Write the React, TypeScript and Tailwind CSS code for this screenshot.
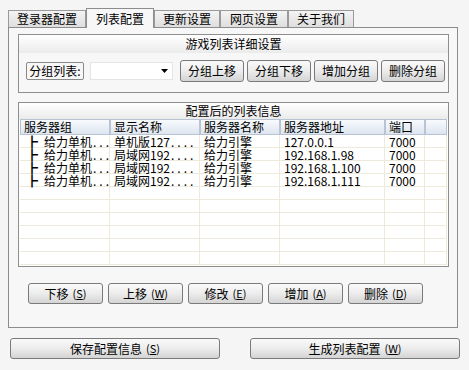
const font = "font-['SimSun','Noto_Sans_CJK_SC',sans-serif]";

const tabs = ["登录器配置", "列表配置", "更新设置", "网页设置", "关于我们"];
const tabWidths = ["w-[78px]", "w-[68px]", "w-[66px]", "w-[68px]", "w-[66px]"];

const rows = [
  ["给力单机", "单机版127", "给力引擎", "127.0.0.1", "7000"],
  ["给力单机", "局域网192", "给力引擎", "192.168.1.98", "7000"],
  ["给力单机", "局域网192", "给力引擎", "192.168.1.100", "7000"],
  ["给力单机", "局域网192", "给力引擎", "192.168.1.111", "7000"],
];

const colWidths = ["w-[90px]", "w-[90px]", "w-[80px]", "w-[105px]", "w-[40px]", "flex-1"];
const headers = ["服务器组", "显示名称", "服务器名称", "服务器地址", "端口", ""];

const Btn = ({ children, className = "" }: { children: React.ReactNode; className?: string }) => (
  <div
    className={`flex items-center justify-center rounded-[3px] border border-[#7a7a7a] bg-gradient-to-b from-[#fafafa] via-[#ececec] to-[#d4d4d4] text-[12px] leading-none text-black ${className}`}
  >
    {children}
  </div>
);

const Key = ({ k }: { k: string }) => (
  <span className="ml-[4px] text-[11px]">
    (<span className="underline">{k}</span>)
  </span>
);

const GroupHeader = ({ title, h }: { title: string; h: string }) => (
  <div
    className={`${h} flex items-center justify-center bg-gradient-to-b from-[#ffffff] to-[#ebebeb] text-[12px] text-black`}
  >
    {title}
  </div>
);

export default function App() {
  return (
    <div className={`w-[469px] h-[370px] bg-[#f5f5f5] ${font} text-black overflow-hidden`}>
      {/* tabs */}
      <div className="flex items-end h-[27px] pl-[8px]">
        {tabs.map((t, i) =>
          i === 1 ? (
            <div
              key={t}
              className={`${tabWidths[i]} h-[20px] -mb-px z-10 flex items-center justify-center border border-b-0 border-[#8c8c8c] bg-[#f7f7f7] text-[12px]`}
            >
              {t}
            </div>
          ) : (
            <div
              key={t}
              className={`${tabWidths[i]} h-[17px] flex items-center justify-center border border-[#9a9a9a] border-b-0 bg-gradient-to-b from-[#f4f4f4] to-[#dedede] text-[12px]`}
            >
              {t}
            </div>
          )
        )}
      </div>

      {/* main panel */}
      <div className="ml-[8px] w-[450px] h-[301px] border border-[#8c8c8c] bg-[#f7f7f7] flex flex-col pl-[9px] pr-[8px] pt-[6px]">
        {/* group 1 */}
        <div className="h-[59px] border border-[#8e8e8e] flex flex-col">
          <GroupHeader title="游戏列表详细设置" h="h-[18px]" />
          <div className="flex items-center pl-[7px] pt-[7px]">
            <div className="w-[58px] h-[18px] border border-[#8a8a8a] rounded-[2px] flex items-center justify-center text-[12px]">
              分组列表:
            </div>
            <div className="ml-[6px] w-[83px] h-[18px] bg-white border border-[#e4e4e4] flex items-center justify-end pr-[4px]">
              <svg width="7" height="4" viewBox="0 0 7 4">
                <path d="M0 0h7L3.5 4z" fill="#000" />
              </svg>
            </div>
            <div className="ml-[7px] flex gap-[3px]">
              <Btn className="w-[64px] h-[22px]">分组上移</Btn>
              <Btn className="w-[64px] h-[22px]">分组下移</Btn>
              <Btn className="w-[64px] h-[22px]">增加分组</Btn>
              <Btn className="w-[64px] h-[22px]">删除分组</Btn>
            </div>
          </div>
        </div>

        {/* group 2 */}
        <div className="mt-[9px] h-[165px] border border-[#8e8e8e] flex flex-col bg-white">
          <GroupHeader title="配置后的列表信息" h="h-[16px]" />
          <div className="flex-1 flex flex-col px-[1px] overflow-hidden">
            <div className="flex h-[16px] shrink-0">
              {headers.map((h, i) => (
                <div
                  key={i}
                  className={`${colWidths[i]} h-full border border-[#b8c4d4] bg-gradient-to-b from-[#f8fafd] to-[#dde5ef] text-[12px] leading-[14px] pl-[3px]`}
                >
                  {h}
                </div>
              ))}
            </div>
            {Array.from({ length: 10 }).map((_, r) => (
              <div key={r} className="flex h-[13px] shrink-0 shadow-[inset_0_-1px_0_#eeeadb]">
                {colWidths.map((w, c) => {
                  const v = rows[r]?.[c] ?? "";
                  const dotted = v && (c === 0 || c === 1);
                  return (
                    <div
                      key={c}
                      className={`${w} h-[13px] shadow-[inset_-1px_0_0_#eeeadb] text-[12px] leading-[13px] whitespace-nowrap ${
                        c === 0 ? "pl-[6px]" : "pl-[4px]"
                      }`}
                    >
                      {c === 0 && v ? <span className="font-bold mr-[6px]">┣</span> : null}
                      {v}
                      {dotted ? (
                        <span className="tracking-[3px] ml-[1px]">{c === 0 ? "..." : "...."}</span>
                      ) : null}
                    </div>
                  );
                })}
              </div>
            ))}
          </div>
        </div>

        {/* bottom buttons in panel */}
        <div className="mt-[16px] ml-[10px] flex gap-[5px]">
          <Btn className="w-[75px] h-[21px]">
            下移<Key k="S" />
          </Btn>
          <Btn className="w-[75px] h-[21px]">
            上移<Key k="W" />
          </Btn>
          <Btn className="w-[75px] h-[21px]">
            修改<Key k="E" />
          </Btn>
          <Btn className="w-[75px] h-[21px]">
            增加<Key k="A" />
          </Btn>
          <Btn className="w-[75px] h-[21px]">
            删除<Key k="D" />
          </Btn>
        </div>
      </div>

      {/* footer buttons */}
      <div className="mt-[10px] pl-[10px] flex gap-[30px]">
        <Btn className="w-[210px] h-[21px]">
          保存配置信息<Key k="S" />
        </Btn>
        <Btn className="w-[210px] h-[21px]">
          生成列表配置<Key k="W" />
        </Btn>
      </div>
    </div>
  );
}
